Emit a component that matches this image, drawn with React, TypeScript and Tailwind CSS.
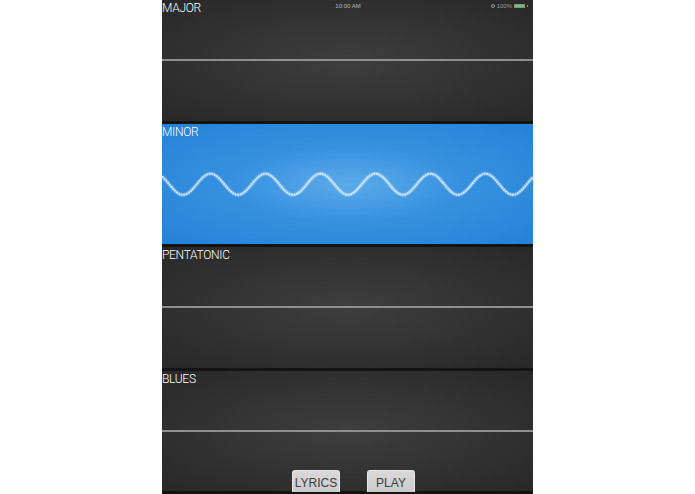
const SCALES = ['MAJOR', 'MINOR', 'PENTATONIC', 'BLUES'];
const ACTIVE = 'MINOR';

function wavePoints() {
  const pts: string[] = [];
  for (let x = 0; x <= 371; x += 1) {
    const y = 60 + 10.5 * Math.cos((2 * Math.PI * (x - 21)) / 55);
    pts.push(`${x},${y.toFixed(2)}`);
  }
  return pts.join(' ');
}

function StatusBar() {
  return (
    <div className="absolute top-0 left-0 right-0 h-[11px] flex items-center justify-center text-[6px] leading-none text-[#b9b9b9] font-['Liberation_Sans',sans-serif]">
      <span className="ml-[1px]">10:00 AM</span>
      <div className="absolute right-[5px] top-[3px] flex items-center gap-[2px]">
        <span className="w-[4px] h-[4px] rounded-full border border-[#9a9a9a]" />
        <span className="text-[#9a9a9a]">100%</span>
        <span className="w-[11px] h-[4px] bg-[#4cd964] border border-[#8a8a8a]" />
        <span className="w-[1px] h-[2px] bg-[#8a8a8a]" />
      </div>
    </div>
  );
}

function ScaleRow({ name }: { name: string }) {
  const active = name === ACTIVE;
  return (
    <div
      className={`flex-1 grid border-b-[3px] border-[#141414] ${
        active
          ? 'bg-[radial-gradient(ellipse_at_center,#5cabea_0%,#3690df_45%,#2482d6_100%)]'
          : 'bg-[radial-gradient(ellipse_at_center,#3e3e3e_0%,#333333_50%,#282828_100%)]'
      }`}
    >
      {active ? (
        <svg className="[grid-area:1/1] w-full h-full" viewBox="0 0 371 120" preserveAspectRatio="none">
          <polyline points={wavePoints()} fill="none" stroke="#ffffff" strokeOpacity="0.25" strokeWidth="4" />
          <polyline points={wavePoints()} fill="none" stroke="#e8f2fb" strokeOpacity="0.85" strokeWidth="2" strokeDasharray="2 0.6" />
        </svg>
      ) : (
        <div className="[grid-area:1/1] flex flex-col">
          <div className="flex-1" />
          <div className="h-[2px] bg-[#8f8f8f]" />
          <div className="flex-1" />
        </div>
      )}
      <span className="[grid-area:1/1] self-start pt-[1px] text-[12px] leading-[14px] font-light tracking-[-0.3px] text-white font-['Roboto',sans-serif]">
        {name}
      </span>
    </div>
  );
}

export default function App() {
  return (
    <div className="w-full h-[494px] bg-white">
      <div className="relative w-[371px] h-[494px] mx-auto flex flex-col overflow-hidden">
        {SCALES.map((s) => (
          <ScaleRow key={s} name={s} />
        ))}
        <StatusBar />
        <div className="absolute bottom-[2px] left-[130px] flex gap-[27px]">
          {['LYRICS', 'PLAY'].map((b) => (
            <button
              key={b}
              className="w-[48px] h-[22px] rounded-t-[3px] bg-[linear-gradient(#d9d9d9,#cbcbcb)] border-t border-x border-[#e6e6e6] text-[12px] text-[#3c3c3c] font-['Liberation_Sans',sans-serif] flex items-center justify-center pt-[2px]"
            >
              {b}
            </button>
          ))}
        </div>
      </div>
    </div>
  );
}
